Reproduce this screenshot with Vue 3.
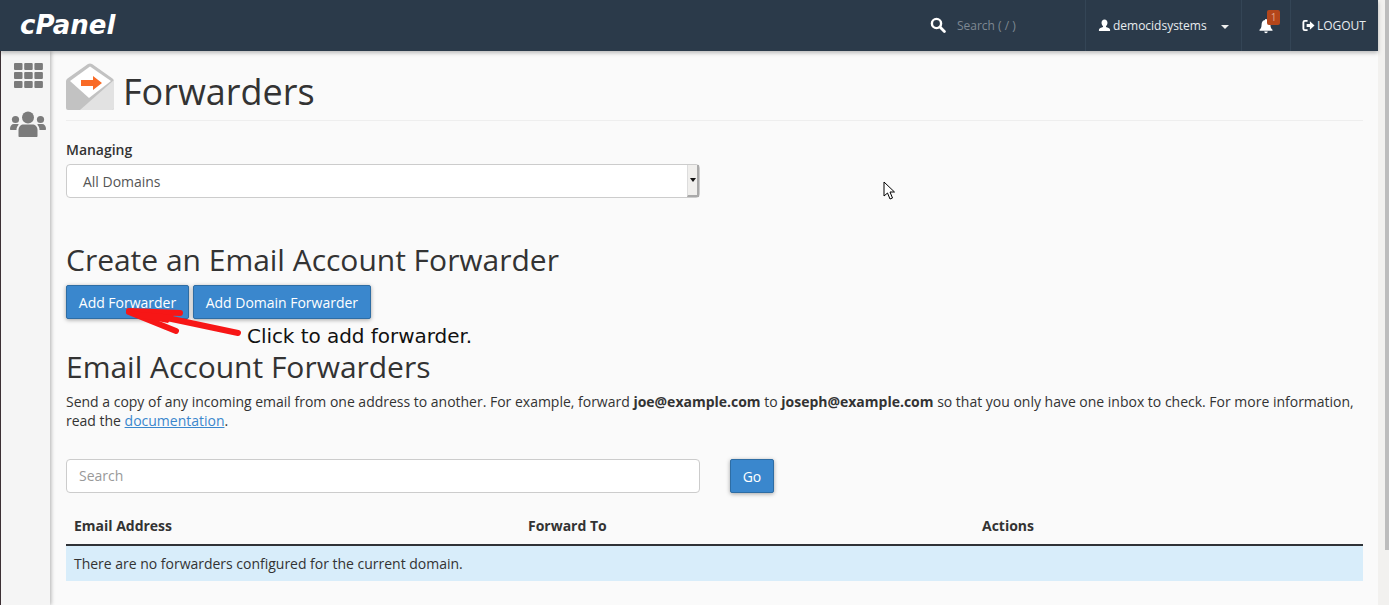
<script setup>
const columns = ['Email Address', 'Forward To', 'Actions']
</script>

<template>
  <div class="page">
    <div class="shell">
      <header class="topbar">
        <span class="logo">cPanel</span>
        <div class="top-right">
          <div class="top-search">
            <svg class="ico-search" viewBox="0 0 16 16" width="16" height="16"><circle cx="6.5" cy="6.5" r="4.6" fill="none" stroke="#fff" stroke-width="2.4"/><path d="M10 10l4.4 4.4" stroke="#fff" stroke-width="2.8" stroke-linecap="round"/></svg>
            <span class="search-ph">Search ( / )</span>
          </div>
          <div class="top-user">
            <svg viewBox="0 0 14 14" width="13" height="13"><path d="M7 0.5c2 0 3.2 1.5 3.2 3.6 0 1.5-.7 2.9-1.6 3.6v1c1.800.7 4.400 1.300 4.400 3v1.300H1v-1.300c0-1.700 2.600-2.300 4.400-3v-1C4.500 7 3.800 5.600 3.800 4.100 3.800 2 5 .5 7 .5z" fill="#fff"/></svg>
            <span>democidsystems</span>
            <i class="caret"></i>
          </div>
          <div class="top-bell">
            <svg viewBox="0 0 16 16" width="16" height="16"><path d="M8 1c.6 0 1 .4 1 1 2.300.4 3.400 2.200 3.400 4.500 0 3 1 4.300 2.100 5.300v.9H1.500v-.9c1.100-1 2.100-2.300 2.100-5.300C3.600 4.200 4.700 2.400 7 2c0-.6.400-1 1-1zM6.300 13.600h3.400c0 1-.8 1.600-1.700 1.600s-1.700-.6-1.700-1.600z" fill="#fff"/></svg>
            <span class="badge">1</span>
          </div>
          <div class="top-logout">
            <svg viewBox="0 0 14 14" width="13" height="13"><path d="M6 2H3a1.500 1.500 0 0 0-1.500 1.500v7A1.500 1.500 0 0 0 3 12h3" fill="none" stroke="#fff" stroke-width="2"/><path d="M5 5.500h3.500V2.500L13.500 7l-5 4.500v-3H5z" fill="#fff"/></svg>
            <span>LOGOUT</span>
          </div>
        </div>
      </header>

      <div class="body-row">
        <aside class="sidebar">
          <svg class="side-grid" viewBox="0 0 29 25" width="29" height="25">
            <g fill="#7b7b7b">
              <rect x="0" y="0" width="8.500" height="7" rx="1"/><rect x="10.200" y="0" width="8.500" height="7" rx="1"/><rect x="20.400" y="0" width="8.500" height="7" rx="1"/>
              <rect x="0" y="9" width="8.500" height="7" rx="1"/><rect x="10.200" y="9" width="8.500" height="7" rx="1"/><rect x="20.400" y="9" width="8.500" height="7" rx="1"/>
              <rect x="0" y="18" width="8.500" height="7" rx="1"/><rect x="10.200" y="18" width="8.500" height="7" rx="1"/><rect x="20.400" y="18" width="8.500" height="7" rx="1"/>
            </g>
          </svg>
          <svg class="side-users" viewBox="0 0 36 26" width="36" height="26">
            <g fill="#7b7b7b">
              <circle cx="18" cy="6.500" r="6"/>
              <circle cx="5.500" cy="8.500" r="3.600"/>
              <circle cx="30.500" cy="8.500" r="3.600"/>
              <path d="M8.500 25v-6c0-3.500 2.500-5.500 5-5.500h9c2.500 0 5 2 5 5.500v6c0 .6-.4 1-1 1h-17c-.6 0-1-.4-1-1z"/>
              <path d="M0 18c0-3 1.500-5 4-5h3.500c.6 0 1 .2 1.300.5C7.300 15 6.500 16.500 6.500 19H1c-.6 0-1-.4-1-1z"/>
              <path d="M36 18c0-3-1.500-5-4-5h-3.500c-.6 0-1 .2-1.300.5 1.500 1.500 2.300 3 2.300 5.500h5.500c.6 0 1-.4 1-1z"/>
            </g>
          </svg>
        </aside>

        <main class="content">
          <div class="page-title">
            <svg class="mail-icon" viewBox="0 0 48 48" width="48" height="48">
              <path d="M0 18 Q0 16.500 1.500 15.500 L22 1 Q24 0 26 1 L46.500 15.500 Q48 16.500 48 18 V45 a2 2 0 0 1-2 2 H2 a2 2 0 0 1-2-2z" fill="#c2c2c2"/>
              <path d="M48 17 V45 a2 2 0 0 1-2 2 H14 z" fill="#e2e2e2"/>
              <path d="M4 18 L24 3.500 L45 18 L23 35 z" fill="#fff"/>
              <path d="M15 17h12v-4l9 7-9 7v-4H15z" fill="#f96a26"/>
            </svg>
            <h1>Forwarders</h1>
          </div>

          <label class="managing">Managing</label>
          <div class="select">
            <span>All Domains</span>
            <span class="select-btn"><i></i></span>
          </div>

          <h2 class="h-create">Create an Email Account Forwarder</h2>
          <div class="actions">
            <button class="btn">Add Forwarder</button>
            <button class="btn">Add Domain Forwarder</button>
          </div>

          <h2 class="h-list">Email Account Forwarders</h2>
          <p class="desc">Send a copy of any incoming email from one address to another. For example, forward <b>joe@example.com</b> to <b>joseph@example.com</b> so that you only have one inbox to check. For more information, read the <a>documentation</a>.</p>

          <div class="search-row">
            <div class="search-box">Search</div>
            <button class="btn go">Go</button>
          </div>

          <div class="table-head">
            <div v-for="c in columns" :key="c">{{ c }}</div>
          </div>
          <div class="table-row">There are no forwarders configured for the current domain.</div>
        </main>
        <div class="gutter"></div>
      </div>
    </div>

    <div class="scrollbar"><div class="thumb"></div></div>

    <svg class="annot-arrow" viewBox="0 0 130 40" width="130" height="40">
      <g fill="none" stroke="#f71616" stroke-linecap="round" stroke-linejoin="round">
        <path d="M45 14 L116 29" stroke-width="6"/>
        <path d="M7 7 L58 9" stroke-width="6"/>
        <path d="M7 8 L54 27" stroke-width="6"/>
      </g>
      <path d="M7 7 L52 11 L46 19 L20 14z" fill="#f71616"/>
    </svg>
    <span class="annot-text">Click to add forwarder.</span>

    <svg class="cursor" viewBox="0 0 13 20" width="13" height="20">
      <path d="M1 1 V15 L4.500 12 L7 18 L9.500 17 L7 11 H11.500 z" fill="#fff" stroke="#000" stroke-width="1" stroke-linejoin="round"/>
    </svg>
  </div>
</template>

<style scoped>
.page {
  position: relative;
  width: 1389px;
  height: 605px;
  overflow: hidden;
  display: flex;
  background: #f2f1ef;
  font-family: "Open Sans", sans-serif;
  font-size: 14px;
  letter-spacing: -0.001em;
  color: #333;
}
.shell {
  width: 1378px;
  display: flex;
  flex-direction: column;
  flex: none;
}
.topbar {
  height: 51px;
  flex: none;
  background: #2b3a4a;
  display: flex;
  align-items: stretch;
  justify-content: space-between;
  box-shadow: 0 2px 4px rgba(0, 0, 0, 0.25);
  position: relative;
  z-index: 2;
  color: #fff;
}
.logo {
  margin-left: 20px;
  align-self: center;
  font-family: "DejaVu Sans", sans-serif;
  font-weight: 700;
  font-style: italic;
  font-size: 26px;
  letter-spacing: 0;
  color: #fff;
  margin-top: -2px;
}
.top-right {
  display: flex;
  align-items: stretch;
}
.top-search {
  width: 186px;
  display: flex;
  align-items: center;
  padding-left: 30px;
  box-sizing: border-box;
  border-right: 1px solid #344556;
}
.search-ph {
  margin-left: 11px;
  color: #7e8892;
  font-size: 12px;
}
.ico-search {
  position: relative;
  top: -1px;
}
.top-user {
  width: 156px;
  box-sizing: border-box;
  display: flex;
  align-items: center;
  padding-left: 12px;
  font-size: 12px;
  border-right: 1px solid #344556;
}
.top-user span {
  margin-left: 2px;
  color: #e8ecef;
}
.caret {
  margin-left: 14px;
  border-left: 4px solid transparent;
  border-right: 4px solid transparent;
  border-top: 4px solid #eee;
  margin-top: 2px;
}
.top-bell {
  width: 49px;
  box-sizing: border-box;
  position: relative;
  display: flex;
  align-items: center;
  padding-left: 16px;
  border-right: 1px solid #344556;
}
.badge {
  position: absolute;
  left: 25px;
  top: 10px;
  width: 13px;
  height: 15px;
  border-radius: 2px;
  background: #b4461b;
  color: #e2a78c;
  font-size: 10px;
  line-height: 15px;
  text-align: center;
}
.top-logout {
  width: 87px;
  box-sizing: border-box;
  display: flex;
  align-items: center;
  padding-left: 11px;
  font-size: 12px;
  gap: 2px;
  color: #e8ecef;
}
.body-row {
  flex: 1;
  display: flex;
  min-height: 0;
}
.sidebar {
  width: 50px;
  flex: none;
  box-sizing: border-box;
  border-left: 1px solid #3c3034;
  background: #f5f5f5;
  box-shadow: 1px 0 4px rgba(0, 0, 0, 0.3);
  display: flex;
  flex-direction: column;
  align-items: center;
  padding: 12px 0 0 6px;
  position: relative;
  z-index: 1;
}
.side-users {
  margin-top: 23px;
  margin-left: -2px;
}
.content {
  flex: 1;
  min-width: 0;
  background: #fafafa;
  padding: 0 0 0 16px;
}
.gutter {
  width: 15px;
  background: #fafafa;
  flex: none;
}
.page-title {
  height: 70px;
  box-sizing: border-box;
  display: flex;
  align-items: flex-start;
  padding-top: 12px;
  border-bottom: 1px solid #eee;
}
.mail-icon {
  flex: none;
}
h1 {
  margin: 0 0 0 9px;
  font-size: 36px;
  line-height: 58px;
  font-weight: 400;
  color: #333;
}
.managing {
  display: block;
  margin-top: 19px;
  font-weight: 600;
  line-height: 19px;
  color: #333;
}
.select {
  margin-top: 5px;
  width: 634px;
  height: 34px;
  box-sizing: border-box;
  background: #fff;
  border: 1px solid #ccc;
  border-radius: 4px;
  padding-left: 16px;
  display: flex;
  align-items: center;
  justify-content: space-between;
  color: #555;
  position: relative;
}
.select-btn {
  width: 12px;
  height: 32px;
  box-sizing: border-box;
  background: #f0efed;
  border-left: 1px solid #ddd;
  border-right: 2px solid #a9a9a9;
  border-bottom: 2px solid #a9a9a9;
  display: flex;
  align-items: center;
  justify-content: center;
}
.select-btn i {
  border-left: 3px solid transparent;
  border-right: 3px solid transparent;
  border-top: 4px solid #111;
}
h2 {
  margin: 0;
  font-size: 30px;
  font-weight: 400;
  line-height: 41px;
  color: #333;
}
.h-create {
  margin-top: 41px;
}
.actions {
  margin-top: 5px;
  display: flex;
  gap: 4px;
}
.btn {
  height: 34px;
  padding: 0 11.8px;
  background: #3a87cd;
  border: 1px solid #2e6da4;
  border-radius: 2px;
  color: #fff;
  font-family: "Open Sans", sans-serif;
  font-size: 14px;
  letter-spacing: -0.001em;
  box-shadow: 0 1px 4px rgba(0, 0, 0, 0.35);
}
.h-list {
  margin-top: 27px;
}
.desc {
  margin: 5px 0 0;
  line-height: 19px;
  letter-spacing: -0.008px;
  color: #333;
  width: 1297px;
}
.desc a {
  color: #3a87cd;
  text-decoration: underline;
}
.search-row {
  margin-top: 29px;
  display: flex;
  gap: 30px;
}
.search-box {
  width: 634px;
  height: 34px;
  box-sizing: border-box;
  background: #fff;
  border: 1px solid #ccc;
  border-radius: 4px;
  padding-left: 12px;
  line-height: 32px;
  color: #999;
}
.go {
  width: 44px;
  padding: 0;
}
.table-head {
  margin-top: 16px;
  width: 1297px;
  height: 37px;
  box-sizing: border-box;
  display: grid;
  grid-template-columns: 454px 454px 1fr;
  border-bottom: 2px solid #2f3237;
  font-weight: 700;
  line-height: 34px;
}
.table-head div {
  padding-left: 8px;
}
.table-row {
  width: 1297px;
  height: 35px;
  background: #d8edfa;
  padding-left: 8px;
  box-sizing: border-box;
  line-height: 35px;
}
.scrollbar {
  flex: 1;
  display: flex;
  justify-content: flex-end;
  background: #f2f1ef;
}
.thumb {
  width: 4px;
  height: 550px;
  background: #bdbdbd;
}
.annot-arrow {
  position: absolute;
  left: 122px;
  top: 304px;
  z-index: 3;
}
.annot-text {
  position: absolute;
  left: 247px;
  top: 324px;
  font-family: "DejaVu Sans", sans-serif;
  font-size: 20px;
  line-height: 24px;
  letter-spacing: -0.05px;
  color: #111;
  z-index: 3;
}
.cursor {
  position: absolute;
  left: 883px;
  top: 181px;
  z-index: 3;
}
</style>
